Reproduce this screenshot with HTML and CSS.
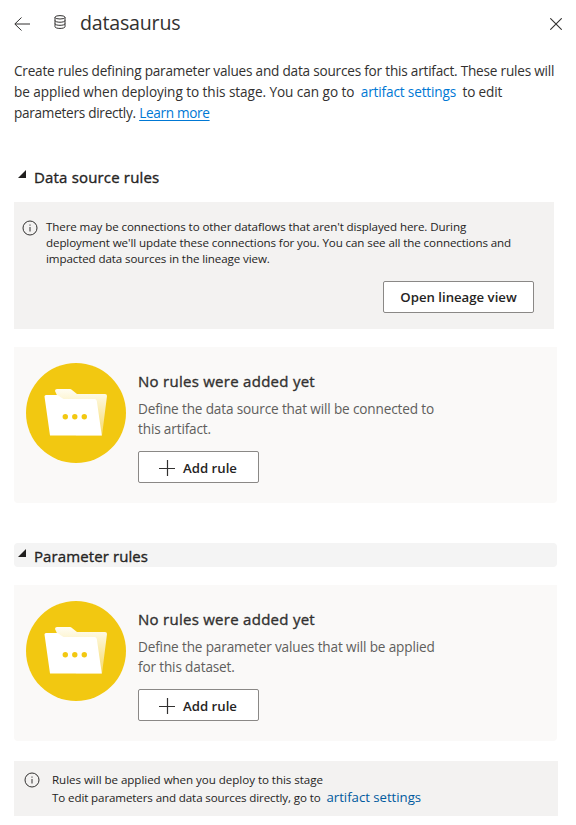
FILE: index.html
```html
<!DOCTYPE html>
<html lang="en">
<head>
<meta charset="utf-8">
<title>datasaurus</title>
<link rel="stylesheet" href="styles.css">
</head>
<body>
<svg class="defs" aria-hidden="true">
  <defs>
    <linearGradient id="fade" x1="0" y1="0" x2="0" y2="1">
      <stop offset="0" stop-color="#fffdf3"/>
      <stop offset="1" stop-color="#f6da66"/>
    </linearGradient>
    <symbol id="folder" viewBox="0 0 100 100">
      <circle cx="50" cy="50" r="50" fill="#f2c811"/>
      <path d="M29 28q0-2 2-2h13q1 0 2 1l5 4h28q2 0 2 2l-5 39.500H50z" fill="url(#fade)"/>
      <path d="M18.500 33.500q0-1.500 1.500-1.500h11q1 0 2 1l4.500 3h31q2 0 2.300 2l5 34.500H24z" fill="#fff"/>
      <g fill="#f2c811"><circle cx="39.300" cy="53.700" r="2.700"/><circle cx="48.800" cy="53.700" r="2.700"/><circle cx="58.300" cy="53.700" r="2.700"/></g>
    </symbol>
    <symbol id="info" viewBox="0 0 16 16">
      <circle cx="8" cy="8" r="7" fill="none" stroke="#323130"/>
      <path d="M8 7v4.500M8 4.500v1.200" stroke="#323130" fill="none"/>
    </symbol>
    <symbol id="plus" viewBox="0 0 18 18">
      <path d="M1 9.500h16M9.500 1v16" stroke="#323130" stroke-width="1.200" fill="none"/>
    </symbol>
  </defs>
</svg>
<main class="panel">
  <header class="header">
    <svg class="back" viewBox="0 0 16 14"><path d="M7.500 .5L.8 7l6.700 6.500M1 7h15" fill="none" stroke="#323130"/></svg>
    <svg class="database" viewBox="0 0 12 14"><g fill="none" stroke="#323130"><ellipse cx="6" cy="2.300" rx="5" ry="1.700"/><path d="M1 2.300v9.400c0 2.300 10 2.300 10 0V2.300M1 5.500c0 2.300 10 2.300 10 0M1 8.600c0 2.300 10 2.300 10 0"/></g></svg>
    <h1 class="title">datasaurus</h1>
    <svg class="close" viewBox="0 0 12 12"><path d="M.3.3l11.400 11.400M11.700.3L.3 11.700" fill="none" stroke="#323130" stroke-width="1.100"/></svg>
  </header>
  <p class="intro"><span class="tight">Create rules defining parameter values and data sources for this artifact. These rules will</span><br><span class="loose">be applied when deploying to this stage. You can go to</span> <a class="link spaced">artifact settings</a> to edit<br><span class="tighter">parameters directly.</span> <a class="link underlined">Learn more</a></p>

  <h2 class="section"><svg class="caret" viewBox="0 0 8 8"><path d="M8 0v8H0z" fill="#201f1e"/></svg>Data source rules</h2>
  <section class="notice">
    <div class="notice-body">
      <svg class="info"><use href="#info"/></svg>
      <p class="notice-text">There may be connections to other dataflows that aren't displayed here. During<br>deployment we'll update these connections for you. You can see all the connections and<br>impacted data sources in the lineage view.</p>
    </div>
    <button class="button lineage">Open lineage view</button>
  </section>
  <section class="card">
    <svg class="folder"><use href="#folder"/></svg>
    <div class="card-body">
      <h3 class="card-title">No rules were added yet</h3>
      <p class="card-text">Define the data source that will be connected to<br>this artifact.</p>
      <button class="button add"><svg class="plus"><use href="#plus"/></svg>Add rule</button>
    </div>
  </section>

  <h2 class="section shaded"><svg class="caret" viewBox="0 0 8 8"><path d="M8 0v8H0z" fill="#201f1e"/></svg>Parameter rules</h2>
  <section class="card">
    <svg class="folder"><use href="#folder"/></svg>
    <div class="card-body">
      <h3 class="card-title">No rules were added yet</h3>
      <p class="card-text">Define the parameter values that will be applied<br>for this dataset.</p>
      <button class="button add"><svg class="plus"><use href="#plus"/></svg>Add rule</button>
    </div>
  </section>
  <footer class="footer">
    <svg class="info"><use href="#info"/></svg>
    <p class="footer-text"><span class="footer-lead">Rules will be applied when you deploy to this stage</span><br>To edit parameters and data sources directly, go to <a class="footer-link">artifact settings</a></p>
  </footer>
</main>
</body>
</html>
```
FILE: styles.css
```css
* { box-sizing: border-box; }
body {
  margin: 0;
  background: #fff;
  color: #323130;
  font-family: "Open Sans", "Noto Sans", sans-serif;
}
h1, h2, h3, p { margin: 0; white-space: nowrap; }
svg { display: block; flex: none; }
.defs { position: absolute; width: 0; height: 0; }
.panel { padding-left: 14px; height: 825px; overflow: hidden; }
.header { display: flex; align-items: center; height: 44px; padding-right: 14px; }
.back { width: 16px; height: 14px; margin-top: 4px; }
.database { width: 12px; height: 14px; margin-left: 24px; }
.title { margin: 1px 0 0 14px; font-size: 19.6px; font-weight: 400; line-height: 28px; letter-spacing: -0.2px; }
.close { width: 12px; height: 12px; margin: 4px 0 0 auto; }
.intro { margin-top: 16px; font-size: 13.6px; line-height: 21px; letter-spacing: -0.15px; }
.tight { letter-spacing: -0.21px; }
.tighter { letter-spacing: -0.28px; }
.loose { letter-spacing: -0.06px; }
.link { color: #0078d4; }
.spaced { margin: 0 3px; }
.underlined { text-decoration: underline; text-underline-offset: 2px; letter-spacing: -0.32px; }
.section {
  display: flex;
  align-items: center;
  width: 543px;
  height: 24px;
  margin-top: 41px;
  padding: 1px 0 0 5px;
  border-radius: 4px;
  color: #252423;
  font-size: 15px;
  font-weight: 400;
  line-height: 22px;
  letter-spacing: 0.17px;
  -webkit-text-stroke: 0.35px;
}
.shaded { margin-top: 40px; padding-top: 2px; background: #f4f4f4; letter-spacing: 0.1px; }
.caret { width: 8px; height: 8px; margin: -6px 8px 0 -1px; }
.shaded .caret { margin-top: -7px; }
.notice { width: 540px; height: 127px; margin-top: 14px; padding: 17px 20px 0 8px; background: #f3f2f1; }
.notice-body { display: flex; gap: 8px; }
.info { width: 16px; height: 16px; margin-top: 2px; }
.notice .info { margin-top: 1px; }
.notice-text { color: #252423; font-size: 11.6px; line-height: 16px; letter-spacing: -0.11px; }
.button {
  display: flex;
  align-items: center;
  justify-content: center;
  height: 32px;
  padding: 0;
  border: 1px solid #8a8886;
  border-radius: 2px;
  background: #fff;
  color: #252423;
  font: 600 13.2px/20px "Open Sans", "Noto Sans", sans-serif;
}
.lineage { width: 151px; margin: 14px 0 0 auto; }
.card {
  display: flex;
  gap: 12px;
  width: 543px;
  height: 156px;
  margin-top: 18px;
  padding: 16px 12px;
  border-radius: 0 0 4px 4px;
  background: #faf9f8;
}
.folder { width: 100px; height: 100px; }
.card-body { padding-top: 7px; }
.card-title { font-size: 15px; font-weight: 400; line-height: 22px; letter-spacing: 0.27px; -webkit-text-stroke: 0.35px; }
.card-text { margin-top: 7px; color: #605e5c; font-size: 13.6px; line-height: 20px; letter-spacing: -0.15px; }
.add { width: 121px; margin-top: 12px; padding-top: 2px; gap: 7px; }
.plus { width: 18px; height: 18px; margin: -1px 0 0 -2px; }
.footer { display: flex; gap: 12px; width: 544px; height: 55px; margin-top: 20px; padding: 10px 0 0 10px; background: #f3f2f1; }
.footer .info { margin-top: 1px; }
.footer-text { color: #252423; font-size: 11.6px; line-height: 18px; letter-spacing: -0.12px; }
.footer-lead { letter-spacing: -0.05px; }
.footer-link { margin-left: 3px; color: #005a9e; font-size: 13.2px; line-height: 16px; letter-spacing: -0.02px; }
```
